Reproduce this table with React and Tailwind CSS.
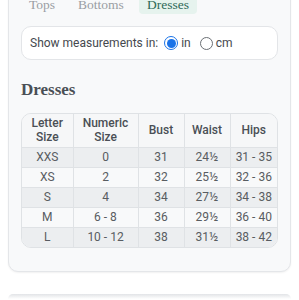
import React, { useState } from "react";

const rows = [
  { letter: "XXS", numeric: "0", bust: "31", waist: "24½", hips: "31 - 35" },
  { letter: "XS", numeric: "2", bust: "32", waist: "25½", hips: "32 - 36" },
  { letter: "S", numeric: "4", bust: "34", waist: "27½", hips: "34 - 38" },
  { letter: "M", numeric: "6 - 8", bust: "36", waist: "29½", hips: "36 - 40" },
  { letter: "L", numeric: "10 - 12", bust: "38", waist: "31½", hips: "38 - 42" },
];

const serif = { fontFamily: '"Liberation Serif", "DejaVu Serif", serif' };

function Radio({ checked }) {
  return checked ? (
    <span className="flex h-[14px] w-[14px] items-center justify-center rounded-full border-[1.5px] border-[#1a73e8] bg-white">
      <span className="h-[9px] w-[9px] rounded-full bg-[#1a73e8]"></span>
    </span>
  ) : (
    <span className="h-[13px] w-[13px] rounded-full border-[1.5px] border-[#6b6f74] bg-white"></span>
  );
}

export default function App() {
  const [unit, setUnit] = useState("in");
  const tabs = [
    { name: "Tops", w: "w-[42px]" },
    { name: "Bottoms", w: "w-[62px]" },
    { name: "Dresses", w: "w-[58px]" },
  ];

  return (
    <div
      className="h-[300px] w-[299px] overflow-hidden bg-white"
      style={{ fontFamily: 'Roboto, "Liberation Sans", sans-serif' }}
    >
      {/* Size guide card */}
      <div className="mx-[8px] -mt-[10px] rounded-b-[10px] border border-[#e4e6e9] bg-[#f8f9fa] px-[12px] pb-[23px] shadow-[0_1px_2px_rgba(0,0,0,0.06)]">
        {/* Tabs */}
        <div className="flex gap-[7px]">
          {tabs.map((t) => (
            <div
              key={t.name}
              className={`flex h-[23px] items-end justify-center pb-[1px] text-[13.5px] leading-[16px] ${t.w} ${
                t.name === "Dresses"
                  ? "rounded-b-[4px] bg-[#e6f3ee] text-[#2e6a58]"
                  : "text-[#9a9ea3]"
              }`}
              style={serif}
            >
              {t.name}
            </div>
          ))}
        </div>

        {/* Units */}
        <div className="mt-[12px] flex h-[34px] items-center rounded-[10px] border border-[#e3e5e8] bg-white pl-[8px] text-[12px] text-[#45494e]">
          <span>Show measurements in:</span>
          <button
            onClick={() => setUnit("in")}
            className="ml-[6px] flex items-center gap-[3px]"
          >
            <Radio checked={unit === "in"} />
            <span>in</span>
          </button>
          <button
            onClick={() => setUnit("cm")}
            className="ml-[9px] flex items-center gap-[3px]"
          >
            <Radio checked={unit === "cm"} />
            <span>cm</span>
          </button>
        </div>

        <h2
          className="mt-[20px] text-[17px] font-bold leading-[20px] text-[#4a4f55]"
          style={serif}
        >
          Dresses
        </h2>

        {/* Size table */}
        <div className="mt-[13px] overflow-hidden rounded-[10px] border border-[#dfe2e5]">
          <table className="w-full table-fixed border-collapse text-center text-[12px] text-[#585c61]">
            <colgroup>
              <col className="w-[51px]" />
              <col className="w-[65px]" />
              <col className="w-[46px]" />
              <col className="w-[46px]" />
              <col className="w-[47px]" />
            </colgroup>
            <thead>
              <tr className="h-[33px] bg-[#f6f7f8] text-[#4a4f55]">
                <th className="border-r border-b border-[#dfe2e5] font-medium leading-[14px]">
                  Letter
                  <br />
                  Size
                </th>
                <th className="border-r border-b border-[#dfe2e5] font-medium leading-[14px]">
                  Numeric
                  <br />
                  Size
                </th>
                <th className="border-r border-b border-[#dfe2e5] font-medium">Bust</th>
                <th className="border-r border-b border-[#dfe2e5] font-medium">Waist</th>
                <th className="border-b border-[#dfe2e5] font-medium">Hips</th>
              </tr>
            </thead>
            <tbody>
              {rows.map((r, i) => (
                <tr
                  key={r.letter}
                  className={`h-[20px] ${i % 2 === 0 ? "bg-[#eceef0]" : "bg-[#f8f9fa]"}`}
                >
                  <td className={`border-r border-[#dfe2e5] ${i < rows.length - 1 ? "border-b" : ""}`}>{r.letter}</td>
                  <td className={`border-r border-[#dfe2e5] ${i < rows.length - 1 ? "border-b" : ""}`}>{r.numeric}</td>
                  <td className={`border-r border-[#dfe2e5] ${i < rows.length - 1 ? "border-b" : ""}`}>{r.bust}</td>
                  <td className={`border-r border-[#dfe2e5] ${i < rows.length - 1 ? "border-b" : ""}`}>{r.waist}</td>
                  <td className={`border-[#dfe2e5] ${i < rows.length - 1 ? "border-b" : ""}`}>{r.hips}</td>
                </tr>
              ))}
            </tbody>
          </table>
        </div>
      </div>

      {/* Next card edge */}
      <div className="mx-[8px] mt-[22px] h-[5px] rounded-t-[6px] bg-gradient-to-b from-[#e2e4e7] to-white"></div>
    </div>
  );
}
